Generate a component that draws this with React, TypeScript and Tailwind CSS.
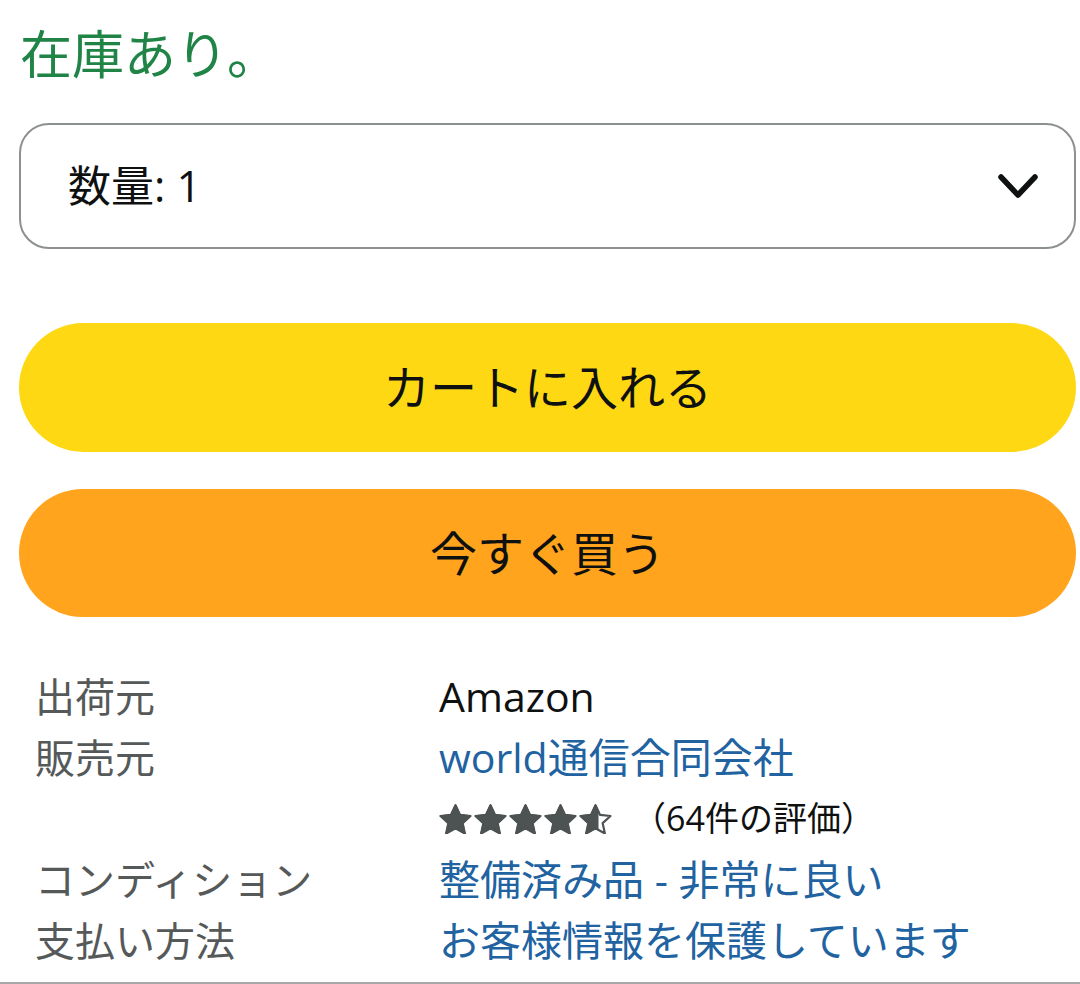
import { useId } from "react";

const jp = "font-['Open_Sans','Noto_Sans_CJK_JP',sans-serif]";

const STAR =
  "M12 1.6l3.05 6.55 7.15.8-5.33 4.86 1.5 7.05L12 17.3l-6.37 3.56 1.5-7.05L1.8 8.95l7.15-.8z";

const Star = ({ fill = 1 }: { fill?: number }) => {
  const id = useId();
  return (
    <svg viewBox="1 0.8 22 20.4" className="h-[30px] w-[33px]">
      <defs>
        <clipPath id={id}>
          <rect x="0" y="0" width={1.8 + 20.4 * fill} height="24" />
        </clipPath>
      </defs>
      <path
        d={STAR}
        fill="none"
        stroke="#4d5252"
        strokeWidth="1.5"
        strokeLinejoin="round"
      />
      <path
        d={STAR}
        fill="#4d5252"
        stroke="#4d5252"
        strokeWidth="1"
        strokeLinejoin="round"
        clipPath={`url(#${id})`}
      />
    </svg>
  );
};

const rows = [
  { label: "出荷元", value: <span className="text-[#0f1111]">Amazon</span> },
  {
    label: "販売元",
    value: (
      <div>
        <div className="text-[#2162a1]">world通信合同会社</div>
        <div className="flex items-center h-[61px]">
          <div className="flex gap-[2px]">
            <Star />
            <Star />
            <Star />
            <Star />
            <Star fill={0.6} />
          </div>
          <span className="ml-[20px] text-[34px] text-[#0f1111]">
            （64件の評価）
          </span>
        </div>
      </div>
    ),
  },
  {
    label: "コンディション",
    value: <span className="text-[#2162a1]">整備済み品 - 非常に良い</span>,
  },
  {
    label: "支払い方法",
    value: <span className="text-[#2162a1]">お客様情報を保護しています</span>,
  },
];

export default function App() {
  return (
    <div
      className={`${jp} relative w-[1080px] h-[984px] overflow-hidden bg-white border-b-2 border-[#a8a8a8]`}
    >
      <div className="pl-[19px] w-[1076px]">
        <div className="pt-[24px] pl-[1px] text-[52px] leading-[60px] text-[#1f8446]">
          在庫あり。
        </div>

        {/* quantity select */}
        <div className="mt-[39px] h-[126px] rounded-[30px] border-2 border-[#8d9090] bg-white flex items-center justify-between pl-[47px] pr-[35px]">
          <span className="text-[43px] text-[#0f1111]">数量: 1</span>
          <svg
            viewBox="0 0 42 28"
            className="w-[42px] h-[28px]"
            fill="none"
            stroke="#0f1111"
            strokeWidth="5.5"
            strokeLinecap="round"
            strokeLinejoin="round"
          >
            <path d="M4 5l17 18L38 5" />
          </svg>
        </div>

        <div className="mt-[74px] flex flex-col gap-[37px]">
          <button className="h-[129px] rounded-full bg-[#ffd814] text-[47px] text-[#0f1111]">
            カートに入れる
          </button>
          <button className="h-[128px] rounded-full bg-[#ffa41c] text-[47px] text-[#0f1111]">
            今すぐ買う
          </button>
        </div>

        {/* details table */}
        <div className="mt-[49px] pl-[16px] grid grid-cols-[404px_1fr] text-[40px] leading-[61px]">
          {rows.map((r) => (
            <div key={r.label} className="contents">
              <div className="text-[#565959]">{r.label}</div>
              <div className="text-[41px]">{r.value}</div>
            </div>
          ))}
        </div>
      </div>
    </div>
  );
}
